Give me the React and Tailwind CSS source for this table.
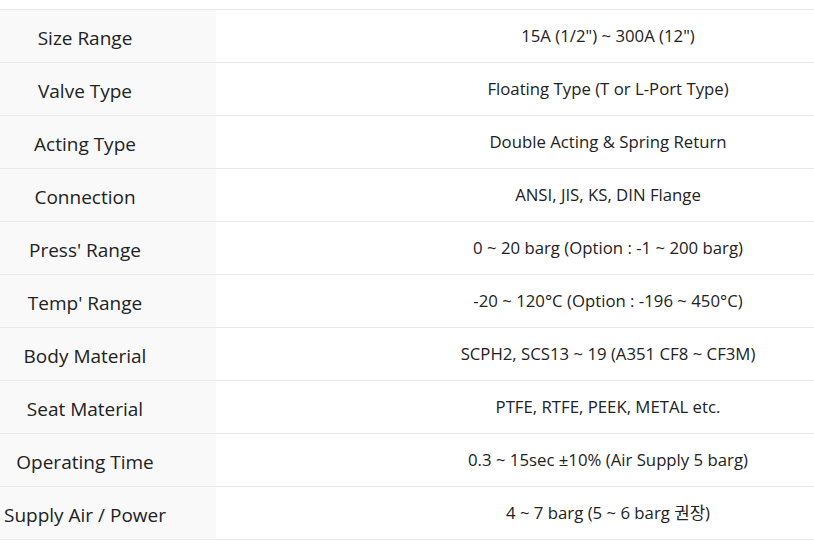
import React from 'react';

const specs = [
    ['Size Range', '15A (1/2") ~ 300A (12")'],
    ['Valve Type', 'Floating Type (T or L-Port Type)'],
    ['Acting Type', 'Double Acting & Spring Return'],
    ['Connection', 'ANSI, JIS, KS, DIN Flange'],
    ["Press' Range", '0 ~ 20 barg (Option : -1 ~ 200 barg)'],
    ["Temp' Range", '-20 ~ 120°C (Option : -196 ~ 450°C)'],
    ['Body Material', 'SCPH2, SCS13 ~ 19 (A351 CF8 ~ CF3M)'],
    ['Seat Material', 'PTFE, RTFE, PEEK, METAL etc.'],
    ['Operating Time', '0.3 ~ 15sec ±10% (Air Supply 5 barg)'],
    ['Supply Air / Power', '4 ~ 7 barg (5 ~ 6 barg 권장)'],
];

export default function App() {
    return (
        <div
            className="w-[814px] h-[548px] overflow-hidden bg-white text-[#222]"
            style={{ fontFamily: '"Open Sans", "Noto Sans CJK KR", sans-serif' }}
        >
            <div className="w-[1000px] mt-[9px] border-t border-[#e9e9e9]">
                {specs.map(([label, value]) => (
                    <div key={label} className="flex h-[53px] border-b border-[#e9e9e9]">
                        {/* Label */}
                        <div className="w-[216px] shrink-0 bg-[#f9f9f9] pr-[46px] flex items-center justify-center pt-[5px]">
                            <span className="text-[19px] whitespace-nowrap">{label}</span>
                        </div>
                        {/* Value */}
                        <div className="flex-1 flex items-center justify-center">
                            <span className="text-[16.75px] whitespace-nowrap">{value}</span>
                        </div>
                    </div>
                ))}
            </div>
        </div>
    );
}
